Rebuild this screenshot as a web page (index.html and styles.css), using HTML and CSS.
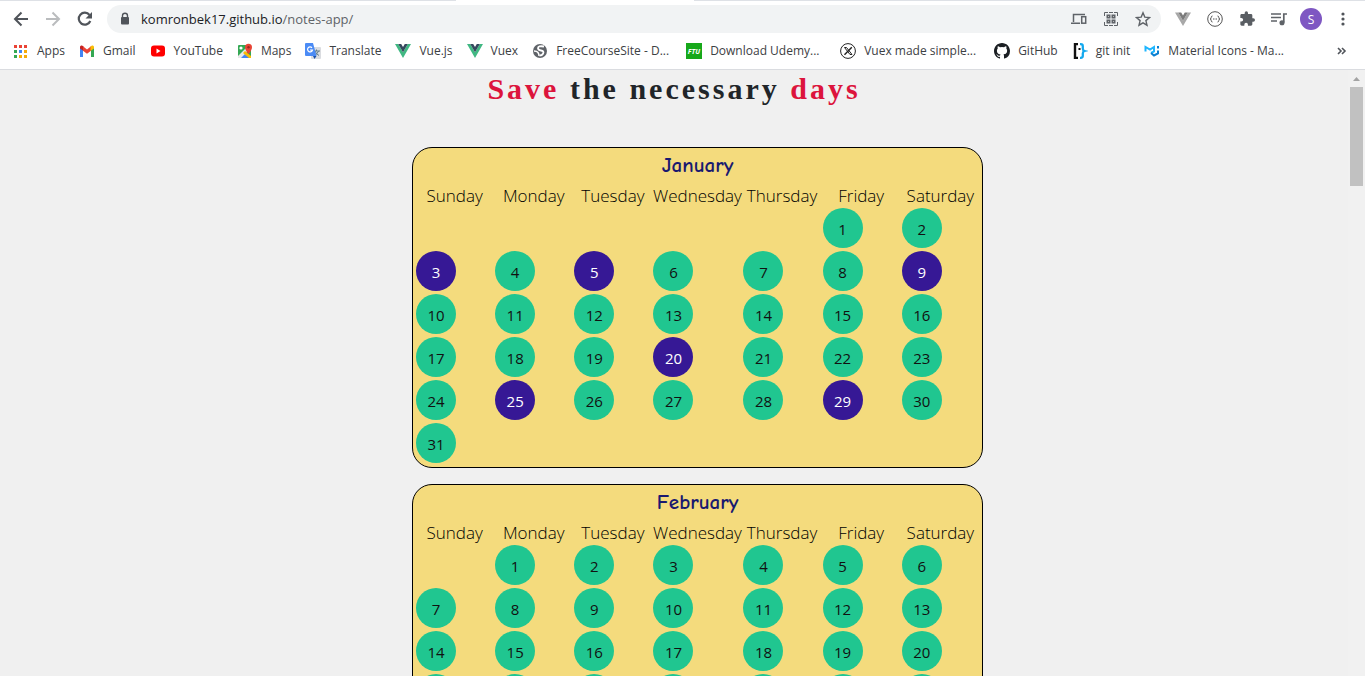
FILE: index.html
```html
<!DOCTYPE html>
<html lang="en">
<head>
<meta charset="utf-8">
<title>notes-app</title>
<link rel="stylesheet" href="styles.css">
</head>
<body>
<header class="browser">
  <div class="tabstrip"><span class="tab-active"></span></div>
  <div class="toolbar">
    <button class="tool" aria-label="Back"><svg width="16" height="16" viewBox="0 0 16 16" fill="none" stroke="#50545a" stroke-width="2"><path d="M15 8H2.500M8.500 1.500 2 8l6.500 6.500"/></svg></button>
    <button class="tool" aria-label="Forward"><svg width="16" height="16" viewBox="0 0 16 16" fill="none" stroke="#babcbe" stroke-width="2"><path d="M1 8h12.500M7.500 1.500 14 8l-6.500 6.500"/></svg></button>
    <button class="tool" aria-label="Reload"><svg width="16" height="16" viewBox="0 0 16 16"><path d="M13.300 10A6 6 0 1 1 12.500 4" fill="none" stroke="#50545a" stroke-width="2.200"/><path d="M15 1v6.500H8.500z" fill="#50545a"/></svg></button>
    <div class="omnibox">
      <svg width="12" height="14" viewBox="0 0 12 14"><path d="M3.500 6V3.800a2.500 2.500 0 0 1 5 0V6" fill="none" stroke="#50545a" stroke-width="1.400"/><rect x="2" y="5" width="8" height="7.500" rx="1" fill="#50545a"/></svg>
      <span class="url">komronbek17.github.io<span class="path">/notes-app/</span></span>
      <button class="tool" aria-label="Send to device"><svg width="16" height="16" viewBox="0 0 16 16" fill="none" stroke="#5f6368" stroke-width="1.500"><path d="M2.500 11V3.500H14M0 12.200h9"/><rect x="10.700" y="5.700" width="4" height="6.500"/></svg></button>
      <button class="tool" aria-label="QR code"><svg width="16" height="16" viewBox="0 0 16 16"><path d="M1.500 5V1.500H5M11 1.500h3.500V5M14.500 11v3.500H11M5 14.500H1.500V11M6 1.500h4M6 14.500h4" fill="none" stroke="#5f6368"/><path d="M3.500 3.500h4v4h-4zM8.500 3.500h4v4h-4zM3.500 8.500h4v4h-4zM8.500 8.500h4v4h-4z" fill="#5f6368"/><path d="M5 5h1v1H5zM10 5h1v1h-1zM5 10h1v1H5zM10 10h1v1h-1z" fill="#bbb"/></svg></button>
      <button class="tool" aria-label="Bookmark this page"><svg width="16" height="16" viewBox="0 0 16 16"><path d="m8 1.800 1.800 4.300 4.700.4-3.600 3.100 1.100 4.600L8 11.800l-4 2.400 1.100-4.600-3.600-3.100 4.700-.4z" fill="none" stroke="#5f6368" stroke-width="1.400"/></svg></button>
    </div>
    <button class="tool" aria-label="Vue devtools"><svg width="16" height="16" viewBox="0 0 16 16"><path d="M0 1.500h3.200L8 9.800l4.800-8.300H16L8 15z" fill="#a8a8a8"/><path d="M3.200 1.500h3L8 4.600l1.800-3.100h3L8 9.800z" fill="#7b7b7b"/></svg></button>
    <button class="tool" aria-label="JSON viewer"><svg width="16" height="16" viewBox="0 0 16 16" fill="none" stroke="#555"><circle cx="8" cy="8" r="7.300"/><path d="M5.500 5q-1.300 0-1.300 1.500T3 8q1.200 0 1.200 1.500T5.500 11M10.500 5q1.300 0 1.300 1.500T13 8q-1.200 0-1.200 1.500T10.500 11M6 8h1M7.500 8h1M9 8h1"/></svg></button>
    <button class="tool" aria-label="Extensions"><svg width="16" height="16" viewBox="0 0 24 24"><path d="M21.500 11H20V6.500c0-1.100-.9-2-2-2h-4.500V3a2.500 2.500 0 0 0-5 0v1.500H4c-1.100 0-2 .9-2 2v4h1.500a2.700 2.700 0 0 1 0 5.400H2V20c0 1.100.9 2 2 2h4v-1.500a2.700 2.700 0 0 1 5.400 0V22H18c1.100 0 2-.9 2-2v-4h1.500a2.500 2.500 0 0 0 0-5z" fill="#5a5e63"/></svg></button>
    <button class="tool" aria-label="Media controls"><svg width="16" height="16" viewBox="0 0 16 16" fill="none" stroke="#5f6368" stroke-width="1.700"><path d="M0 3h10M0 6.500h10M0 10h6M16 3h-3.200v8.500"/><circle cx="11" cy="11.700" r="1.700" fill="#5f6368"/></svg></button>
    <button class="avatar" aria-label="Profile">S</button>
    <button class="tool" aria-label="Menu"><svg width="16" height="16" viewBox="0 0 16 16" fill="#50545a"><circle cx="8" cy="3" r="1.600"/><circle cx="8" cy="8" r="1.600"/><circle cx="8" cy="13" r="1.600"/></svg></button>
  </div>
  <nav class="bookmarks">
    <a href="#"><svg width="16" height="16" viewBox="0 0 16 16"><path d="M1 2h3v3H1zM6 2h3v3H6zM11 2h3v3h-3z" fill="#ea4335"/><path d="M1 7h3v3H1z" fill="#34a853"/><path d="M6 7h3v3H6z" fill="#4285f4"/><path d="M11 7h3v3h-3zM6 12h3v3H6zM11 12h3v3h-3z" fill="#f5ab0b"/><path d="M1 12h3v3H1z" fill="#34a853"/></svg><span>Apps</span></a>
    <a href="#"><svg width="16" height="16" viewBox="0 0 16 16"><path d="M1 4v10h3V7z" fill="#4285f4"/><path d="M15 4v10h-3V7z" fill="#34a853"/><path d="M1 4.500V4q0-2 2-1.500l1.500 1V8L1 5.500z" fill="#c5221f"/><path d="M4 3.200 8 6.500l4-3.300v4.500L8 10.800 4 7.700z" fill="#ea4335"/><path d="M15 4.500V4q0-2-2-1.500l-1.500 1V8L15 5.500z" fill="#fbbc04"/></svg><span>Gmail</span></a>
    <a href="#"><svg width="16" height="16" viewBox="0 0 16 16"><rect x="1" y="2.500" width="14" height="11" rx="3" fill="#f00"/><path d="M6.500 5.500v5l4-2.500z" fill="#fff"/></svg><span>YouTube</span></a>
    <a href="#"><svg width="16" height="16" viewBox="0 0 16 16"><rect x="1" y="2" width="13" height="13" rx="1" fill="#34a853"/><path d="m1 15 7-7 6 7z" fill="#4285f4"/><path d="M1 13 12 2h2v3L4 15H1z" fill="#e8e8e8"/><path d="m8 8 6 5v2h-2L6 10z" fill="#fbbc04"/><circle cx="4" cy="5" r="1.600" fill="#fff"/><path d="M11.500 11Q8 7 8 4.200a3.500 3.500 0 0 1 7 0Q15 7 11.500 11z" fill="#e84435"/><circle cx="11.500" cy="4.200" r="1.200" fill="#972b22"/></svg><span>Maps</span></a>
    <a href="#"><svg width="16" height="16" viewBox="0 0 16 16"><rect x="6" y="4" width="10" height="12" rx="1" fill="#dadce0"/><path d="M8 8h7M11.500 6.500V8M10 8q1 3 4 4.500M13.500 8q-1 3-4 4.500" fill="none" stroke="#607d8b"/><path d="M1 0h7l3.500 13H1q-1 0-1-1V1q0-1 1-1z" fill="#4b8bf5"/><path d="m8 13h3.500L9.500 16z" fill="#174ea6"/><path d="M7 4.800A2.500 2.500 0 1 0 7.500 7H5" fill="none" stroke="#fff" stroke-width="1.200"/></svg><span>Translate</span></a>
    <a href="#"><svg width="16" height="16" viewBox="0 0 16 16"><path d="M0 1h3.200L8 9.300 12.800 1H16L8 15z" fill="#41b883"/><path d="M3.200 1h3L8 4.100 9.800 1h3L8 9.300z" fill="#35495e"/></svg><span>Vue.js</span></a>
    <a href="#"><svg width="16" height="16" viewBox="0 0 16 16"><path d="M0 1h3.200L8 9.300 12.800 1H16L8 15z" fill="#41b883"/><path d="M3.200 1h3L8 4.100 9.800 1h3L8 9.300z" fill="#35495e"/></svg><span>Vuex</span></a>
    <a class="wide" href="#"><svg width="16" height="16" viewBox="0 0 16 16"><circle cx="8" cy="8" r="7" fill="#5f6368"/><path d="M12 3.500Q6 2.500 6 5.200 6.200 7.300 9 7.500q3.500.5 2 3.200-1 1.800-3.500 1.800" fill="none" stroke="#fff" stroke-width="1.800"/><path d="M2 8q3 0 4 1.500t1 3.500" fill="none" stroke="#fff" stroke-width="1.400"/></svg><span>FreeCourseSite - D...</span></a>
    <a class="wide" href="#"><svg width="16" height="16" viewBox="0 0 16 16"><rect width="16" height="16" fill="#17a81a"/><text class="ftu" x="8" y="11" text-anchor="middle">FTU</text></svg><span>Download Udemy...</span></a>
    <a class="wide" href="#"><svg width="16" height="16" viewBox="0 0 16 16" fill="none" stroke="#222"><circle cx="8" cy="8" r="7.400"/><path d="m4.500 4.500 5.500 7M6.500 4.500l5.500 7M4.500 4.500h2M10 11.500h2" stroke-width="1"/><path d="m11.800 4.300-7.300 7.400" stroke-width="1.500"/></svg><span>Vuex made simple...</span></a>
    <a href="#"><svg width="16" height="16" viewBox="0 0 16 16"><path d="M8 0C3.580 0 0 3.580 0 8c0 3.540 2.290 6.530 5.470 7.590.4.070.55-.17.55-.38v-1.340c-2.230.480-2.690-1.070-2.690-1.070-.36-.93-.89-1.180-.89-1.180-.73-.5.050-.49.050-.49.800.060 1.230.83 1.230.83.71 1.220 1.870.87 2.330.66.070-.52.280-.87.510-1.070-1.780-.2-3.640-.89-3.640-3.950 0-.87.310-1.590.82-2.150-.08-.2-.36-1.020.080-2.120 0 0 .67-.21 2.200.82a7.600 7.600 0 0 1 4 0c1.530-1.040 2.200-.82 2.200-.82.44 1.100.16 1.920.080 2.120.51.560.82 1.270.82 2.150 0 3.070-1.870 3.750-3.650 3.950.29.250.54.730.54 1.480v2.190c0 .21.150.46.550.38A8 8 0 0 0 16 8c0-4.420-3.580-8-8-8z" fill="#1b1f23"/></svg><span>GitHub</span></a>
    <a href="#"><svg width="16" height="16" viewBox="0 0 16 16"><path d="M6 1H3V15h3" fill="none" stroke="#111" stroke-width="2.400"/><path d="M8 1.200h.8q2 0 2 2v2.300q0 2 1.700 2.500-1.700.5-1.700 2.500v2.300q0 2-2 2H8" fill="none" stroke="#14a9ee" stroke-width="2.300"/><rect x="6.500" y="5" width="2" height="2" fill="#111"/></svg><span>git init</span></a>
    <a href="#"><svg width="16" height="16" viewBox="0 0 16 16"><path d="M1.500 8.500V4L6 6.500 10 4v4.500L7 10" fill="none" stroke="#1fb6ff" stroke-width="2"/><path d="m7 10 3 2.500 4-2.200V7.500M14 3v2.500" fill="none" stroke="#0b7fd0" stroke-width="2"/></svg><span>Material Icons - Ma...</span></a>
    <button class="tool more" aria-label="More bookmarks"><svg width="10" height="10" viewBox="0 0 10 10" fill="none" stroke="#50545a" stroke-width="1.600"><path d="m1 2 3 3-3 3M5 2l3 3-3 3"/></svg></button>
  </nav>
</header>
<div class="viewport">
  <main class="page">
    <h1><span class="accent">Save</span> the necessary <span class="accent">days</span></h1>
    <div class="months">
      <section class="month">
        <h2>January</h2>
        <table>
          <colgroup><col class="day"><col class="day"><col class="day"><col class="midweek"><col class="day"><col class="day"><col class="day"></colgroup>
          <thead><tr><th>Sunday</th><th>Monday</th><th>Tuesday</th><th>Wednesday</th><th>Thursday</th><th>Friday</th><th>Saturday</th></tr></thead>
          <tbody>
            <tr><td></td><td></td><td></td><td></td><td></td><td><button>1</button></td><td><button>2</button></td></tr>
            <tr><td><button class="saved">3</button></td><td><button>4</button></td><td><button class="saved">5</button></td><td><button>6</button></td><td><button>7</button></td><td><button>8</button></td><td><button class="saved">9</button></td></tr>
            <tr><td><button>10</button></td><td><button>11</button></td><td><button>12</button></td><td><button>13</button></td><td><button>14</button></td><td><button>15</button></td><td><button>16</button></td></tr>
            <tr><td><button>17</button></td><td><button>18</button></td><td><button>19</button></td><td><button class="saved">20</button></td><td><button>21</button></td><td><button>22</button></td><td><button>23</button></td></tr>
            <tr><td><button>24</button></td><td><button class="saved">25</button></td><td><button>26</button></td><td><button>27</button></td><td><button>28</button></td><td><button class="saved">29</button></td><td><button>30</button></td></tr>
            <tr><td><button>31</button></td><td></td><td></td><td></td><td></td><td></td><td></td></tr>
          </tbody>
        </table>
      </section>
      <section class="month">
        <h2>February</h2>
        <table>
          <colgroup><col class="day"><col class="day"><col class="day"><col class="midweek"><col class="day"><col class="day"><col class="day"></colgroup>
          <thead><tr><th>Sunday</th><th>Monday</th><th>Tuesday</th><th>Wednesday</th><th>Thursday</th><th>Friday</th><th>Saturday</th></tr></thead>
          <tbody>
            <tr><td></td><td><button>1</button></td><td><button>2</button></td><td><button>3</button></td><td><button>4</button></td><td><button>5</button></td><td><button>6</button></td></tr>
            <tr><td><button>7</button></td><td><button>8</button></td><td><button>9</button></td><td><button>10</button></td><td><button>11</button></td><td><button>12</button></td><td><button>13</button></td></tr>
            <tr><td><button>14</button></td><td><button>15</button></td><td><button>16</button></td><td><button>17</button></td><td><button>18</button></td><td><button>19</button></td><td><button>20</button></td></tr>
            <tr><td><button>21</button></td><td><button>22</button></td><td><button>23</button></td><td><button>24</button></td><td><button>25</button></td><td><button>26</button></td><td><button>27</button></td></tr>
            <tr><td><button>28</button></td><td></td><td></td><td></td><td></td><td></td><td></td></tr>
          </tbody>
        </table>
      </section>
    </div>
  </main>
  <div class="scrollbar">
    <svg width="7" height="4" viewBox="0 0 7 4"><path d="M0 4 3.500 0 7 4z" fill="#a3a3a3"/></svg>
    <div class="thumb"></div>
  </div>
</div>
</body>
</html>
```
FILE: styles.css
```css
* { box-sizing: border-box; }

body {
  margin: 0;
  height: 100vh;
  display: flex;
  flex-direction: column;
  overflow: hidden;
  font-family: "Segoe UI", "Open Sans", sans-serif;
  background: #f0f0f0;
}

button {
  border: 0;
  padding: 0;
  background: none;
  font: inherit;
}

.browser {
  flex: none;
  background: #fff;
  border-bottom: 1px solid #dadce0;
}

.tabstrip {
  height: 1px;
  background: #dee1e6;
  padding-left: 456px;
}

.tab-active {
  display: block;
  width: 238px;
  height: 1px;
  background: #fff;
}

.toolbar {
  display: flex;
  align-items: center;
  gap: 16px;
  height: 36px;
  padding: 0 14px 0 13px;
}

.tool {
  flex: none;
  display: flex;
}

.omnibox {
  flex: 1;
  display: flex;
  align-items: center;
  gap: 16px;
  height: 28px;
  margin: 0 -2px;
  padding: 0 10px 0 12px;
  border-radius: 14px;
  background: #f1f3f4;
}

.url {
  flex: 1;
  margin-left: -6px;
  font-size: 13px;
  color: #202124;
}

.path { color: #5f6368; }

.avatar {
  width: 22px;
  height: 22px;
  margin: 0 -3px;
  border-radius: 50%;
  background: #7e57c2;
  color: #fff;
  font-size: 12px;
}

.bookmarks {
  display: flex;
  align-items: center;
  gap: 14px;
  height: 32px;
  padding: 0 18px 4px 13px;
}

.bookmarks a {
  display: flex;
  align-items: center;
  gap: 8px;
  color: #3c4043;
  font-size: 12px;
  line-height: 16px;
  text-decoration: none;
  white-space: nowrap;
}

.bookmarks .wide { width: 140px; }
.bookmarks svg { flex: none; }
.bookmarks .more { margin-left: auto; }

.ftu {
  fill: #fff;
  font: italic bold 7px "Open Sans", sans-serif;
}

.viewport {
  flex: 1;
  min-height: 0;
  display: flex;
}

.page {
  flex: 1;
  overflow: hidden;
}

h1 {
  margin: 0 0 39px;
  font: bold 30px/38px "Times New Roman", "Liberation Serif", serif;
  letter-spacing: 3px;
  text-align: center;
  color: #212529;
}

.accent { color: #dc143c; }

.months {
  display: flex;
  flex-direction: column;
  align-items: center;
  gap: 16px;
  padding-left: 47px;
}

.month {
  padding: 2px;
  border: 1px solid #000;
  border-radius: 20px;
  background: #f4db7d;
}

h2 {
  margin: 0;
  font: bold 21px/30px "Comic Sans MS", "Comic Neue", "Open Sans", sans-serif;
  text-align: center;
  color: #191970;
}

table {
  table-layout: fixed;
  width: 565px;
  border-collapse: collapse;
}

.midweek { width: 90px; }

th {
  height: 27px;
  padding: 5px 0 0;
  font-size: 17px;
  font-weight: 300;
  line-height: 22px;
  color: #000;
}

td {
  height: 43px;
  padding: 1px 1px 2px;
  vertical-align: top;
}

td button {
  display: block;
  width: 40px;
  height: 40px;
  padding-top: 2px;
  border-radius: 50%;
  background: #20c690;
  color: #111;
  font-size: 15px;
}

td .saved {
  background: #361895;
  color: #fff;
}

.scrollbar {
  flex: none;
  width: 17px;
  display: flex;
  flex-direction: column;
  align-items: center;
  gap: 6px;
  padding: 7px 0 0;
  background: #f1f1f1;
}

.thumb {
  width: 13px;
  height: 99px;
  background: #c1c1c1;
}
```
